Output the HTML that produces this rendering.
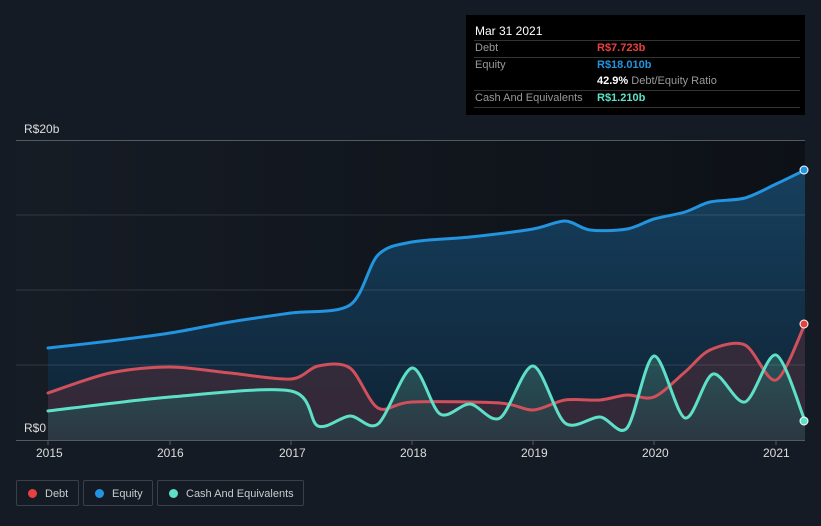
<!DOCTYPE html>
<html><head><style>
body{margin:0;width:821px;height:526px;background:#151b24;font-family:"Liberation Sans",sans-serif;overflow:hidden;position:relative}
.t{position:absolute;font-size:11px}
.leg{position:absolute;top:480px;height:26px;border:1px solid #3a4048;border-radius:2px;color:#c8ccd0;font-size:11px;line-height:26px;box-sizing:border-box;white-space:nowrap}
.leg i{position:absolute;left:11px;top:8px;width:9px;height:9px;border-radius:50%}
</style></head><body>
<svg width="821" height="526" style="position:absolute;left:0;top:0">
<defs>
<linearGradient id="bg" x1="0" x2="1"><stop offset="0" stop-color="#161c25"/><stop offset="1" stop-color="#0d1117"/></linearGradient>
<linearGradient id="eq" x1="0" y1="0" x2="0" y2="1"><stop offset="0" stop-color="#16405e"/><stop offset="1" stop-color="#0f2233"/></linearGradient>
<linearGradient id="ca" x1="0" y1="0" x2="0" y2="1"><stop offset="0" stop-color="#2a5a5c"/><stop offset="1" stop-color="#2a3a44"/></linearGradient>
</defs>
<rect x="16" y="140" width="789" height="300" fill="url(#bg)"/>
<path id="fe" fill="url(#eq)"/>
<path id="fd" fill="#3a2a3a" opacity="0.85"/>
<path id="fc" fill="url(#ca)" opacity="0.85"/>
<g stroke="#ffffff" stroke-opacity="0.12"><line x1="16" y1="215" x2="805" y2="215"/><line x1="16" y1="290" x2="805" y2="290"/><line x1="16" y1="365" x2="805" y2="365"/></g>
<line x1="16" y1="140.5" x2="805" y2="140.5" stroke="#555a60"/>
<line x1="16" y1="440.5" x2="805" y2="440.5" stroke="#555a60"/>
<g stroke="#555a60"><line x1="48" y1="440" x2="48" y2="445"/><line x1="170" y1="440" x2="170" y2="445"/><line x1="291" y1="440" x2="291" y2="445"/><line x1="412" y1="440" x2="412" y2="445"/><line x1="533" y1="440" x2="533" y2="445"/><line x1="654" y1="440" x2="654" y2="445"/><line x1="776" y1="440" x2="776" y2="445"/></g>
<g fill="none" stroke-width="3" stroke-linejoin="round" stroke-linecap="round">
<path id="le" stroke="#2394df"/>
<path id="ld" stroke="#d0505c"/>
<path id="lc" stroke="#5ee0c8"/>
</g>
<circle cx="804" cy="170" r="4" fill="#2394df" stroke="#fff"/>
<circle cx="804" cy="324" r="4" fill="#e8403f" stroke="#fff"/>
<circle cx="804" cy="421" r="4" fill="#5ee0c8" stroke="#fff"/>
</svg>
<script>
function sp(p){var d="M"+p[0][0]+","+p[0][1];for(var i=0;i<p.length-1;i++){var a=p[i-1]||p[i],b=p[i],c=p[i+1],e=p[i+2]||c;var t=0.15;d+=" C"+(b[0]+(c[0]-a[0])*t)+","+(b[1]+(c[1]-a[1])*t)+" "+(c[0]-(e[0]-b[0])*t)+","+(c[1]-(e[1]-b[1])*t)+" "+c[0]+","+c[1];}return d;}
function P(s){return s.split(" ").map(function(q){return q.split(",").map(Number)});}
var E=P("48,348 110,341 170,333 230,322 291,313 350,305 378,255 412,242 470,237 533,229 565,221 590,230 627,229 654,219 685,212 710,202 745,198 776,184 805,170");
var D=P("48,393 110,373 170,367 230,373 291,379 318,366 350,368 378,408 412,402 500,403 533,410 565,400 600,400 627,395 654,397 685,372 710,350 745,345 776,380 805,324");
var C=P("48,411 170,397 291,391 318,426 350,416 378,424 412,368 440,414 470,404 500,418 533,366 565,423 600,417 627,428 654,356 685,418 713,374 745,402 776,355 805,421");
[[E,"le","fe"],[D,"ld","fd"],[C,"lc","fc"]].forEach(function(x){var d=sp(x[0]);document.getElementById(x[1]).setAttribute("d",d);document.getElementById(x[2]).setAttribute("d",d+" L805,440 L48,440Z");});
</script>
<div class="t" style="left:24px;top:122px;color:#ddd;font-size:12px">R$20b</div>
<div class="t" style="left:24px;top:421px;color:#ddd;font-size:12px">R$0</div>
<div class="t" style="left:36px;top:446px;color:#ddd;font-size:12px">2015</div>
<div class="t" style="left:157px;top:446px;color:#ddd;font-size:12px">2016</div>
<div class="t" style="left:279px;top:446px;color:#ddd;font-size:12px">2017</div>
<div class="t" style="left:400px;top:446px;color:#ddd;font-size:12px">2018</div>
<div class="t" style="left:521px;top:446px;color:#ddd;font-size:12px">2019</div>
<div class="t" style="left:642px;top:446px;color:#ddd;font-size:12px">2020</div>
<div class="t" style="left:763px;top:446px;color:#ddd;font-size:12px">2021</div>
<div style="position:absolute;left:466px;top:15px;width:339px;height:100px;background:#000;font-size:11px;color:#999">
<div style="position:absolute;left:9px;top:9px;color:#fff;font-size:12px">Mar 31 2021</div>
<div style="position:absolute;left:8px;right:5px;top:25px;border-top:1px solid #333"></div>
<div style="position:absolute;left:9px;top:27px">Debt</div><div style="position:absolute;left:131px;top:27px;color:#e8403f;font-weight:bold">R$7.723b</div>
<div style="position:absolute;left:8px;right:5px;top:42px;border-top:1px solid #333"></div>
<div style="position:absolute;left:9px;top:44px">Equity</div><div style="position:absolute;left:131px;top:44px;color:#2394df;font-weight:bold">R$18.010b</div>
<div style="position:absolute;left:131px;top:60px"><b style="color:#fff">42.9%</b> Debt/Equity Ratio</div>
<div style="position:absolute;left:8px;right:5px;top:75px;border-top:1px solid #333"></div>
<div style="position:absolute;left:9px;top:77px">Cash And Equivalents</div><div style="position:absolute;left:131px;top:77px;color:#5ee0c8;font-weight:bold">R$1.210b</div>
<div style="position:absolute;left:8px;right:5px;top:92px;border-top:1px solid #333"></div>
</div>
<div class="leg" style="left:16px;width:63px"><i style="background:#e8403f"></i><span style="position:absolute;left:28px">Debt</span></div>
<div class="leg" style="left:83px;width:70px"><i style="background:#2394df"></i><span style="position:absolute;left:28px">Equity</span></div>
<div class="leg" style="left:157px;width:147px"><i style="background:#5ee0c8"></i><span style="position:absolute;left:28px">Cash And Equivalents</span></div>
</body></html>
